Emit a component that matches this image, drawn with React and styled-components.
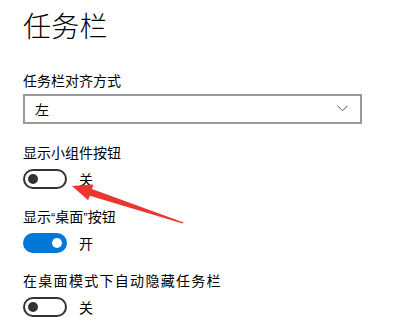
import React from "react";
import styled, { createGlobalStyle } from "styled-components";

const GlobalStyle = createGlobalStyle`
    html, body {
        margin: 0;
        padding: 0;
        background: #ffffff;
    }
    body {
        font-family: "Noto Sans CJK SC", "Noto Sans", sans-serif;
        color: #000000;
    }
`;

const Toggle = ({ on }) => (
    <StToggleRow>
        <StTrack $on={on}>
            <StKnob $on={on} />
        </StTrack>
        <StState>{on ? "开" : "关"}</StState>
    </StToggleRow>
);

const Arrow = () => (
    <StArrow width="404" height="326" viewBox="0 0 404 326">
        <polygon
            points="72,186 93.5,184.6 92,189.1 183.6,222.4 182.6,223.6 89.8,195.7 88.2,200.2"
            fill="#ea3530"
        />
    </StArrow>
);

const App = () => {
    const settings = [
        { label: "显示小组件按钮", on: false, spacing: 0 },
        {
            label: (
                <>
                    显示<StQuote>“</StQuote>桌面<StQuote>”</StQuote>按钮
                </>
            ),
            on: true,
            spacing: 0,
        },
        { label: "在桌面模式下自动隐藏任务栏", on: false, spacing: 1.3 },
    ];

    return (
        <>
            <GlobalStyle />
            <StPage>
                <StTitle>任务栏</StTitle>

                <StLabel $top={27}>任务栏对齐方式</StLabel>
                <StSelect>
                    <span>左</span>
                    <svg width="11" height="7" viewBox="0 0 11 7">
                        <path d="M0.5 0.8 L5.5 5.8 L10.5 0.8" fill="none" stroke="#555" strokeWidth="1" />
                    </svg>
                </StSelect>

                {settings.map((s, i) => (
                    <StSection key={i}>
                        <StLabel $top={i === 0 ? 18 : 17} $spacing={s.spacing}>
                            {s.label}
                        </StLabel>
                        <Toggle on={s.on} />
                    </StSection>
                ))}
                <Arrow />
            </StPage>
        </>
    );
};

export default App;

const StPage = styled.div`
    position: relative;
    width: 404px;
    height: 326px;
    overflow: hidden;
    padding: 7px 23px 0;
    box-sizing: border-box;
`;

const StTitle = styled.h1`
    margin: 0;
    font-size: 28px;
    line-height: 36px;
    font-weight: 300;
    letter-spacing: 0.2px;
`;

const StLabel = styled.div`
    margin-top: ${(p) => p.$top}px;
    font-size: 14px;
    line-height: 20px;
    height: 20px;
    font-weight: 400;
    white-space: nowrap;
    letter-spacing: ${(p) => p.$spacing || 0}px;
`;

const StQuote = styled.span`
    font-family: "Liberation Sans", sans-serif;
    font-size: 13px;
`;

const StSelect = styled.div`
    margin-top: 4px;
    width: 339px;
    height: 30px;
    box-sizing: border-box;
    border: 2px solid #999999;
    display: flex;
    align-items: center;
    justify-content: space-between;
    padding: 0 12px 0 10px;
    font-size: 14px;

    svg {
        margin-top: -2px;
    }
`;

const StSection = styled.div`
    display: flex;
    flex-direction: column;
`;

const StToggleRow = styled.div`
    margin-top: 7px;
    display: flex;
    align-items: center;
    gap: 12px;
    height: 20px;
`;

const StTrack = styled.div`
    width: 44px;
    height: 20px;
    box-sizing: border-box;
    border-radius: 10px;
    border: 2px solid ${(p) => (p.$on ? "#0078d7" : "#333333")};
    background: ${(p) => (p.$on ? "#0078d7" : "#ffffff")};
    display: flex;
    align-items: center;
    justify-content: ${(p) => (p.$on ? "flex-end" : "flex-start")};
    padding: 0 3px;
`;

const StKnob = styled.div`
    width: 10px;
    height: 10px;
    border-radius: 50%;
    background: ${(p) => (p.$on ? "#ffffff" : "#333333")};
`;

const StState = styled.span`
    font-size: 14px;
    line-height: 20px;
`;

const StArrow = styled.svg`
    position: absolute;
    left: 0;
    top: 0;
    pointer-events: none;
`;
